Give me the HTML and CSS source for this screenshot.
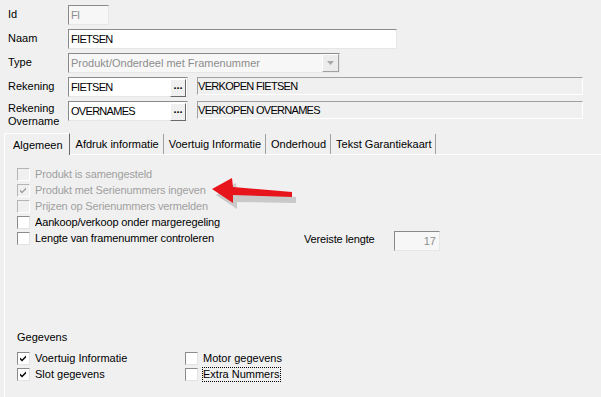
FILE: index.html
```html
<!DOCTYPE html>
<html lang="nl">
<head>
    <meta charset="UTF-8">
    <title>Artikelgroep</title>
    <link rel="stylesheet" href="styles.css">
</head>
<body>
    <div class="form">
        <div class="row">
            <div class="lbl">Id</div>
            <div class="field id-field disabled"><span class="caps">FI</span></div>
        </div>
        <div class="row">
            <div class="lbl">Naam</div>
            <div class="field naam-field"><span class="caps">FIETSEN</span></div>
        </div>
        <div class="row">
            <div class="lbl">Type</div>
            <div class="field type-field disabled">
                <span class="grow">Produkt/Onderdeel met Framenummer</span>
                <span class="drop"><svg width="7" height="4" viewBox="0 0 7 4"><path d="M0 0h7L3.5 4z" fill="#a8a8a8"/></svg></span>
            </div>
        </div>
        <div class="row">
            <div class="lbl">Rekening</div>
            <div class="field code-field">
                <span class="grow caps">FIETSEN</span>
                <span class="dots">...</span>
            </div>
            <div class="static caps">VERKOPEN FIETSEN</div>
        </div>
        <div class="row">
            <div class="lbl two">Rekening<br>Overname</div>
            <div class="field code-field">
                <span class="grow caps">OVERNAMES</span>
                <span class="dots">...</span>
            </div>
            <div class="static caps">VERKOPEN OVERNAMES</div>
        </div>
    </div>

    <div class="tabs">
        <div class="tab active">Algemeen</div>
        <div class="tab">Afdruk informatie</div>
        <div class="tab">Voertuig Informatie</div>
        <div class="tab">Onderhoud</div>
        <div class="tab">Tekst Garantiekaart</div>
    </div>

    <div class="panel">
        <div class="checks">
            <div class="check off"><span class="box"></span>Produkt is samengesteld</div>
            <div class="check off"><span class="box"><svg width="9" height="9" viewBox="0 0 9 9"><path d="M1 3.5l2 2 4-4v2l-4 4-2-2z" fill="#a0a0a0"/></svg></span>Produkt met Serienummers ingeven</div>
            <div class="check off"><span class="box"></span>Prijzen op Serienummers vermelden</div>
            <div class="check"><span class="box"></span>Aankoop/verkoop onder margeregeling</div>
            <div class="lengte-row">
                <div class="check wide"><span class="box"></span>Lengte van framenummer controleren</div>
                <div class="lengte-lbl">Vereiste lengte</div>
                <div class="field lengte-field disabled">17</div>
            </div>
        </div>

        <div class="gegevens">Gegevens</div>
        <div class="geg-grid">
            <div class="check"><span class="box"><svg width="9" height="9" viewBox="0 0 9 9"><path d="M1 3.5l2 2 4-4v2l-4 4-2-2z" fill="#000"/></svg></span>Voertuig Informatie</div>
            <div class="check"><span class="box"></span>Motor gegevens</div>
            <div class="check"><span class="box"><svg width="9" height="9" viewBox="0 0 9 9"><path d="M1 3.5l2 2 4-4v2l-4 4-2-2z" fill="#000"/></svg></span>Slot gegevens</div>
            <div class="check"><span class="box"></span><span class="focus">Extra Nummers</span></div>
        </div>
    </div>

    <svg class="arrow" width="100" height="36" viewBox="0 0 100 36">
        <path d="M10 16 L30 4 L31 14 L90 18 L90 24 L31 23 L31 30 Z" fill="#9a9a9a" opacity="0.45" transform="translate(2 3)"/>
        <path d="M8 13 L28 2 L29 11 L88 16 L88 21 L29 19 L29 27 Z" fill="#e8141b"/>
    </svg>
</body>
</html>
```

FILE: styles.css
```css
body {
    margin: 0;
    background: #f0f0f0;
    font-family: "Liberation Sans", Arial, sans-serif;
    font-size: 11px;
    color: #000;
    position: relative;
    height: 397px;
    overflow: hidden;
}
.form {
    padding: 5px 0 0 8px;
    display: flex;
    flex-direction: column;
    gap: 4px;
}
.row {
    display: flex;
    align-items: flex-start;
    height: 20px;
}
.lbl {
    width: 60px;
    padding-top: 3px;
    line-height: 13px;
}
.lbl.two {
    padding-top: 1px;
}
.caps {
    letter-spacing: -0.7px;
}
.field {
    box-sizing: border-box;
    height: 20px;
    background: #fff;
    border: 1px solid;
    border-color: #8a8a8a #e6e6e6 #e6e6e6 #8a8a8a;
    display: flex;
    align-items: center;
    padding-left: 2px;
    line-height: 13px;
}
.field.disabled {
    color: #8d8d8d;
    background: #f7f7f7;
}
.id-field { width: 41px; }
.naam-field { width: 329px; }
.type-field { width: 272px; }
.code-field { width: 120px; }
.grow { flex: 1; }
.drop {
    box-sizing: border-box;
    width: 17px;
    height: 18px;
    border: 1px solid;
    border-color: #fff #a0a0a0 #a0a0a0 #fff;
    background: #ececec;
    display: flex;
    align-items: center;
    justify-content: center;
}
.dots {
    box-sizing: border-box;
    width: 16px;
    height: 18px;
    margin-right: 1px;
    margin-top: 1px;
    border: 1px solid;
    border-color: #fff #696969 #696969 #fff;
    background: #f0f0f0;
    font-weight: bold;
    text-align: center;
    line-height: 11px;
    letter-spacing: 0;
}
.static {
    box-sizing: border-box;
    margin-left: 9px;
    width: 386px;
    height: 18px;
    border: 1px solid;
    border-color: #a0a0a0 #fff #fff #a0a0a0;
    padding-top: 2px;
    line-height: 13px;
}
.tabs {
    display: flex;
    margin: 11px 0 0 4px;
    height: 22px;
    align-items: flex-end;
}
.tab {
    box-sizing: border-box;
    height: 20px;
    padding: 4px 4px 0 5px;
    border-right: 1px solid #a0a0a0;
    line-height: 13px;
}
.tab.active {
    position: relative;
    z-index: 1;
    height: 22px;
    margin-bottom: -1px;
    margin-right: 1px;
    padding: 5px 6px 0 8px;
    border-top: 1px solid #fff;
    border-left: 1px solid #fff;
    border-right: 1px solid #696969;
    background: #f0f0f0;
}
.panel {
    box-sizing: border-box;
    margin-left: 4px;
    border-top: 1px solid #fff;
    border-left: 1px solid #fff;
    height: 244px;
    padding: 11px 0 0 12px;
}
.checks {
    display: flex;
    flex-direction: column;
    letter-spacing: -0.15px;
}
.check {
    display: flex;
    align-items: center;
    height: 16px;
    line-height: 13px;
}
.check.off {
    color: #a0a0a0;
}
.box {
    box-sizing: border-box;
    width: 13px;
    height: 13px;
    margin-right: 5px;
    background: #fff;
    border: 1px solid;
    border-color: #8a8a8a #e4e4e4 #e4e4e4 #8a8a8a;
    display: flex;
    align-items: center;
    justify-content: center;
}
.check.off .box {
    background: #f0f0f0;
    border-color: #b5b5b5 #fff #fff #b5b5b5;
}
.lengte-row {
    display: flex;
    align-items: center;
    height: 16px;
}
.check.wide {
    width: 287px;
}
.lengte-lbl {
    width: 90px;
    margin-top: 2px;
}
.lengte-field {
    width: 46px;
    justify-content: flex-end;
    padding-right: 3px;
    margin-top: 6px;
    letter-spacing: 0;
}
.gegevens {
    margin-top: 85px;
    height: 16px;
    line-height: 13px;
}
.geg-grid {
    margin-top: 3px;
    display: grid;
    grid-template-columns: 168px auto;
}
.focus {
    outline: 1px dotted #000;
    padding: 0 1px 0 0;
}
.arrow {
    position: absolute;
    left: 204px;
    top: 176px;
}
```
